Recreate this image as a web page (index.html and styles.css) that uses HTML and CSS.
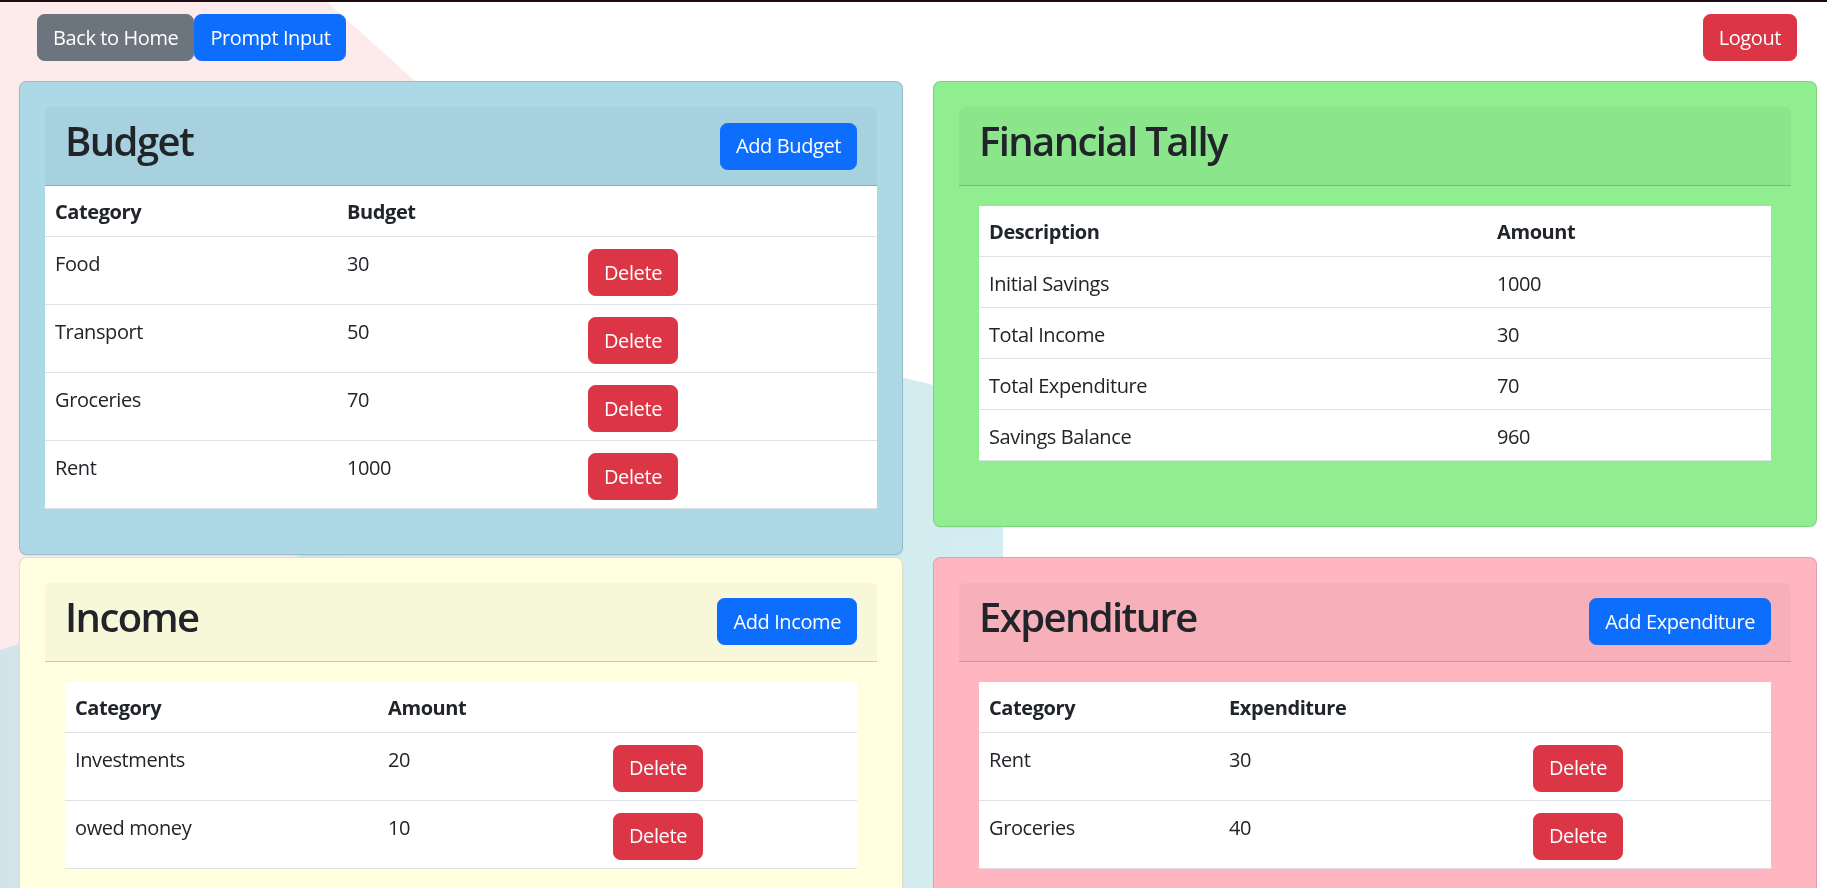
FILE: index.html
```html
<!DOCTYPE html>
<html lang="en">
<head>
<meta charset="utf-8">
<title>Budget Dashboard</title>
<link rel="stylesheet" href="styles.css">
</head>
<body>
<header class="topbar">
  <div class="nav-left">
    <button class="btn btn-secondary">Back to Home</button><button class="btn btn-primary">Prompt Input</button>
  </div>
  <button class="btn btn-danger">Logout</button>
</header>

<main class="grid">
  <section class="card card-budget">
    <div class="card-header">
      <h2>Budget</h2>
      <button class="btn btn-primary">Add Budget</button>
    </div>
    <table class="table">
      <colgroup><col class="w-292"><col class="w-241"><col></colgroup>
      <thead><tr><th>Category</th><th>Budget</th><th></th></tr></thead>
      <tbody>
        <tr><td>Food</td><td>30</td><td><button class="btn btn-danger">Delete</button></td></tr>
        <tr><td>Transport</td><td>50</td><td><button class="btn btn-danger">Delete</button></td></tr>
        <tr><td>Groceries</td><td>70</td><td><button class="btn btn-danger">Delete</button></td></tr>
        <tr><td>Rent</td><td>1000</td><td><button class="btn btn-danger">Delete</button></td></tr>
      </tbody>
    </table>
  </section>

  <section class="card card-tally">
    <div class="card-header">
      <h2>Financial Tally</h2>
    </div>
    <div class="card-body">
      <table class="table">
        <colgroup><col class="w-508"><col></colgroup>
        <thead><tr><th>Description</th><th>Amount</th></tr></thead>
        <tbody>
          <tr><td>Initial Savings</td><td>1000</td></tr>
          <tr><td>Total Income</td><td>30</td></tr>
          <tr><td>Total Expenditure</td><td>70</td></tr>
          <tr><td>Savings Balance</td><td>960</td></tr>
        </tbody>
      </table>
    </div>
  </section>

  <section class="card card-income">
    <div class="card-header">
      <h2>Income</h2>
      <button class="btn btn-primary">Add Income</button>
    </div>
    <div class="card-body">
      <table class="table">
        <colgroup><col class="w-313"><col class="w-225"><col></colgroup>
        <thead><tr><th>Category</th><th>Amount</th><th></th></tr></thead>
        <tbody>
          <tr><td>Investments</td><td>20</td><td><button class="btn btn-danger">Delete</button></td></tr>
          <tr><td>owed money</td><td>10</td><td><button class="btn btn-danger">Delete</button></td></tr>
        </tbody>
      </table>
    </div>
  </section>

  <section class="card card-expense">
    <div class="card-header">
      <h2>Expenditure</h2>
      <button class="btn btn-primary">Add Expenditure</button>
    </div>
    <div class="card-body">
      <table class="table">
        <colgroup><col class="w-240"><col class="w-304"><col></colgroup>
        <thead><tr><th>Category</th><th>Expenditure</th><th></th></tr></thead>
        <tbody>
          <tr><td>Rent</td><td>30</td><td><button class="btn btn-danger">Delete</button></td></tr>
          <tr><td>Groceries</td><td>40</td><td><button class="btn btn-danger">Delete</button></td></tr>
        </tbody>
      </table>
    </div>
  </section>
</main>
</body>
</html>
```

FILE: styles.css
```css
* { box-sizing: border-box; }

html, body { margin: 0; padding: 0; }

body {
  font-family: "Open Sans", "Noto Sans", "DejaVu Sans", sans-serif;
  font-size: 20px;
  line-height: 30px;
  letter-spacing: -0.4px;
  color: #212529;
  background: #ffffff;
  border-top: 2px solid #1c0b11;
  min-height: 888px;
}

/* faint decorative background shapes */
body::before {
  content: "";
  position: fixed;
  inset: 0;
  z-index: -1;
  background: #fdeaea;
  clip-path: polygon(0 0, 325px 0, 425px 90px, 880px 560px, 0 650px);
}

body::after {
  content: "";
  position: fixed;
  inset: 0;
  z-index: -1;
  background: linear-gradient(90deg, #d3e3ea 0%, #d4eef2 60%, #d5f2f5 100%);
  clip-path: polygon(0 650px, 880px 372px, 930px 384px, 1003px 420px, 1003px 888px, 0 888px);
}

/* top navigation */
.topbar {
  display: flex;
  justify-content: space-between;
  align-items: flex-start;
  padding: 12px 30px 0 37px;
  margin-bottom: 20px;
}

.nav-left { display: flex; }

.btn {
  display: inline-block;
  font-family: inherit;
  font-size: 20px;
  line-height: 30px;
  letter-spacing: -0.4px;
  font-weight: 400;
  padding: 7.5px 15px;
  border: 1.25px solid transparent;
  border-radius: 7.5px;
  color: #fff;
  cursor: pointer;
  white-space: nowrap;
}

.btn-secondary { background: #6c757d; border-color: #6c757d; }
.btn-primary   { background: #0d6efd; border-color: #0d6efd; }
.btn-danger    { background: #dc3545; border-color: #dc3545; }

/* cards grid */
.grid {
  display: grid;
  grid-template-columns: 884px 884px;
  column-gap: 30px;
  row-gap: 1.5px;
  align-items: start;
  padding-left: 19px;
}

.card {
  padding: 25px;
  border: 1px solid rgba(0, 0, 0, 0.12);
  border-radius: 7.5px;
  box-shadow: 0 1px 2px rgba(0, 0, 0, 0.06);
}

.card-budget  { background: #add8e6; }
.card-tally   { background: #90ee90; }
.card-income  { background: #ffffe0; }
.card-expense { background: #ffb6c1; }

.card-header {
  display: flex;
  justify-content: space-between;
  align-items: center;
  padding: 10px 20px;
  background: rgba(0, 0, 0, 0.03);
  border-bottom: 1.25px solid rgba(0, 0, 0, 0.175);
  border-radius: 6.25px 6.25px 0 0;
}

.card-header h2 {
  margin: 0 0 10px 0;
  font-size: 40px;
  line-height: 48px;
  font-weight: 600;
  letter-spacing: -1.6px;
}

.card-body { padding: 20px; }

/* tables */
.table {
  width: 100%;
  table-layout: fixed;
  border-collapse: collapse;
  background: #ffffff;
  margin-bottom: 20px;
}

.table th,
.table td {
  padding: 12px 10px 8px;
  text-align: left;
  vertical-align: top;
  border-bottom: 1px solid #dee2e6;
}

.table th { font-weight: 700; padding: 11px 10px 9px; }

.w-292 { width: 292px; }
.w-241 { width: 241px; }
.w-508 { width: 508px; }
.w-313 { width: 313px; }
.w-225 { width: 225px; }
.w-240 { width: 240px; }
.w-304 { width: 304px; }
```
